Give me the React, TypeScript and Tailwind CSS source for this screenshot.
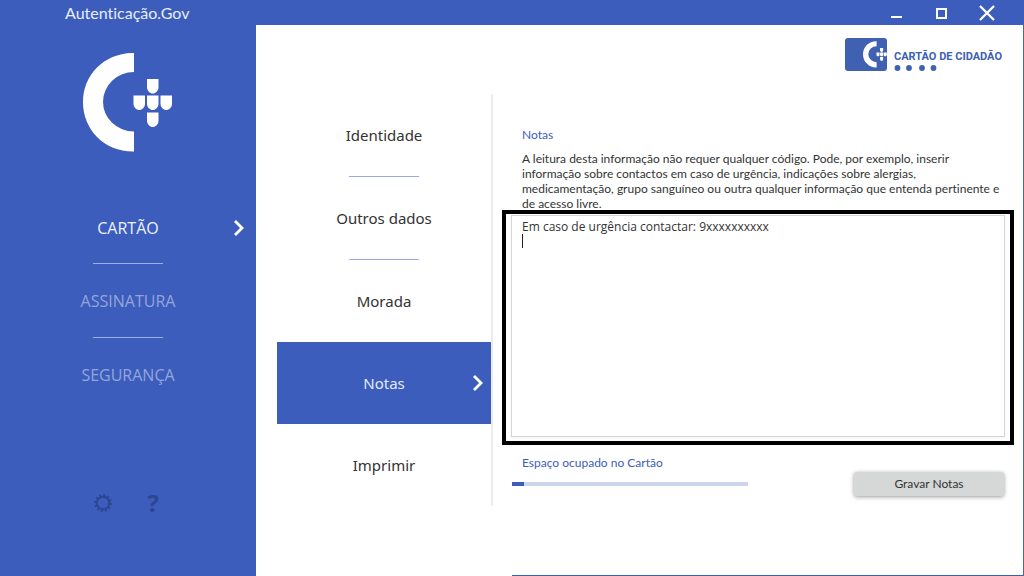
import { useState } from 'react';

const menuFont = "font-['Open_Sans','Noto_Sans',sans-serif]";

function Emblem({ className }: { className: string }) {
  return (
    <svg className={className} viewBox="0 0 90 100" fill="currentColor" aria-hidden="true">
      <path d="M51 0V19A31 29.800 0 0 0 51 78.600V98.500C22 99 0 77 0 49.200S22 -.5 51 0Z" />
      <path d="M64 26h11.500v8c0 4-3 6.500-5.750 6.500S64 38 64 34Z" />
      <path d="M50.500 42.500H62v8c0 4-3 6.500-5.750 6.500s-5.750-2.500-5.750-6.500Z" />
      <path d="M64 42.500h11.500v8c0 4-3 6.500-5.750 6.500S64 54.500 64 50.500Z" />
      <path d="M77.500 42.500H89v8c0 4-3 6.500-5.750 6.500s-5.750-2.500-5.750-6.500Z" />
      <path d="M64 59.500h11.500v8c0 4-3 6.500-5.750 6.500s-5.750-2.500-5.750-6.500Z" />
    </svg>
  );
}

function Arrow() {
  return (
    <svg className="absolute right-2 h-4 w-[10px]" viewBox="0 0 10 16" fill="none" stroke="white" strokeWidth="2.800" aria-hidden="true">
      <path d="M1 1 8 8 1 15" />
    </svg>
  );
}

function Gear() {
  return (
    <svg className="size-[18px]" viewBox="0 0 18 18" fill="none" stroke="currentColor" aria-hidden="true">
      <circle cx="9" cy="9" r="6.200" strokeWidth="1.900" />
      <circle cx="9" cy="9" r="7.900" strokeWidth="1.900" strokeDasharray="2 2.136" />
    </svg>
  );
}

function TitleBar() {
  return (
    <header className="flex h-[25px] items-center justify-between bg-[#3c5dbc] pl-[65px] pr-[29px] text-white">
      <h1 className="text-[16px] leading-6 text-[#e8edf9]">Autenticação.Gov</h1>
      <div className="flex items-center gap-[29px]">
        <button type="button" aria-label="Minimizar">
          <svg className="size-4" viewBox="0 0 16 16" fill="currentColor"><path d="M2 11h11v2H2z" /></svg>
        </button>
        <button type="button" aria-label="Maximizar">
          <svg className="size-4" viewBox="0 0 16 16" fill="none" stroke="currentColor" strokeWidth="2"><path d="M3 4h9v9H3z" /></svg>
        </button>
        <button type="button" aria-label="Fechar">
          <svg className="size-4" viewBox="0 0 16 16" fill="none" stroke="currentColor" strokeWidth="2.300"><path d="m1 1 14 14M15 1 1 15" /></svg>
        </button>
      </div>
    </header>
  );
}

function Sidebar() {
  return (
    <aside className="flex w-1/4 shrink-0 flex-col bg-[#3c5dbc] pt-7 text-white">
      <Emblem className="mx-auto h-[100px] w-[90px]" />
      <nav className={`mt-[39px] flex flex-col items-center text-[16px] ${menuFont}`}>
        <button type="button" className="relative flex h-[71px] w-full items-center justify-center text-[#eef2fb]">
          CARTÃO
          <span className="absolute inset-y-0 right-1 flex items-center"><Arrow /></span>
        </button>
        <hr className="w-[70px] border-[#9daede]" />
        <button type="button" className="h-[73px] w-full text-[#93a6db]">ASSINATURA</button>
        <hr className="w-[70px] border-[#9daede]" />
        <button type="button" className="h-[73px] w-full text-[#93a6db]">SEGURANÇA</button>
      </nav>
      <div className="mt-auto flex items-center justify-center gap-8 pb-[61px] text-[#2c4692]">
        <button type="button" aria-label="Definições"><Gear /></button>
        <button type="button" aria-label="Ajuda" className="w-[18px] font-['Noto_Sans',sans-serif] text-[24px] font-bold leading-6">?</button>
      </div>
    </aside>
  );
}

const items = [
  { label: 'Identidade', divider: true },
  { label: 'Outros dados', divider: true },
  { label: 'Morada', divider: false },
  { label: 'Notas', divider: false },
  { label: 'Imprimir', divider: false },
];

function CardMenu() {
  return (
    <nav className="mt-[69px] flex w-[216px] shrink-0 flex-col self-start border-r-2 border-[#ebebeb] font-['Noto_Sans',sans-serif] text-[15px] text-[#333333]">
      {items.map(({ label, divider }) => (
        <div key={label} className="flex flex-col items-center">
          <button
            type="button"
            aria-current={label === 'Notas' ? 'page' : undefined}
            className="relative flex h-[82px] w-full items-center justify-center aria-[current=page]:bg-[#3c5dbc] aria-[current=page]:text-[#e4eaf8]"
          >
            {label}
            {label === 'Notas' && <Arrow />}
          </button>
          {divider && <hr className="w-[70px] border-[#98a9df]" />}
        </div>
      ))}
    </nav>
  );
}

function CardLogo() {
  return (
    <div className="flex items-start gap-[7px] pr-[2px] text-[#4061b1]">
      <div className="flex h-[33px] w-[42px] items-center justify-end rounded-[3px] bg-[#4061b1] text-white">
        <Emblem className="h-[27px] w-6" />
      </div>
      <div className="flex flex-col gap-[2px] pt-[13px]">
        <span className="font-[Roboto,sans-serif] text-[11px] font-bold leading-3">CARTÃO DE CIDADÃO</span>
        <svg className="h-[6px] w-[44px]" viewBox="0 0 44 6" fill="currentColor" aria-hidden="true">
          <circle cx="3.500" cy="3" r="2.900" />
          <circle cx="15" cy="3" r="2.900" />
          <circle cx="28" cy="3" r="2.900" />
          <circle cx="39.500" cy="3" r="2.900" />
        </svg>
      </div>
    </div>
  );
}

function NotesPanel() {
  const [notes, setNotes] = useState('Em caso de urgência contactar: 9xxxxxxxxxx\n');
  return (
    <section className="flex min-w-0 grow flex-col pl-[19px] pr-[19px] pt-[13px] text-[12px] leading-[15px] text-[#333333]">
      <div className="flex justify-end"><CardLogo /></div>
      <div className="mt-[56px] pl-[10px]">
        <label htmlFor="notes" className="text-[#3c5dbc]">Notas</label>
        <p className="mt-[9px]">
          A leitura desta informação não requer qualquer código. Pode, por exemplo, inserir informação sobre contactos em caso de urgência, indicações sobre alergias, medicamentação, grupo sanguíneo ou outra qualquer informação que entenda pertinente e de acesso livre.
        </p>
      </div>
      <div className="relative -mx-[10px] -mt-px flex border-4 border-black px-[5px] pb-1 pt-px">
        <textarea
          id="notes"
          value={notes}
          onChange={(e) => setNotes(e.target.value)}
          className={`h-[222px] w-full resize-none border border-[#d5d5d5] px-[10px] py-[3px] leading-[15px] caret-transparent shadow-xs outline-none ${menuFont}`}
        />
        <span className="absolute left-4 top-5 h-[14px] w-px bg-[#222222]" />
      </div>
      <div className="flex items-start justify-between">
        <div className="w-[236px] pt-[10px]">
          <p id="usage" className="px-[10px] text-[#3c5dbc]">Espaço ocupado no Cartão</p>
          <div role="progressbar" aria-labelledby="usage" aria-valuenow={5} aria-valuemin={0} aria-valuemax={100} className="mt-3 h-1 bg-[#ccd5ec]">
            <div className="h-full w-[5%] bg-[#3c5dbc]" />
          </div>
        </div>
        <button type="button" className="mt-[27px] h-6 w-[150px] rounded-[3px] bg-[#d5d8d7] pb-px shadow-[0_1px_4px_rgba(0,0,0,0.4)]">Gravar Notas</button>
      </div>
      <hr className="-mr-[19px] mt-auto border-[#3f5fac]" />
    </section>
  );
}

export default function App() {
  return (
    <div className="flex min-h-screen flex-col bg-white font-[Lato,sans-serif] [font-variant-ligatures:none]">
      <TitleBar />
      <div className="flex grow">
        <Sidebar />
        <main className="flex min-w-0 grow border-r border-[#4965b4] pl-[21px]">
          <CardMenu />
          <NotesPanel />
        </main>
      </div>
    </div>
  );
}
